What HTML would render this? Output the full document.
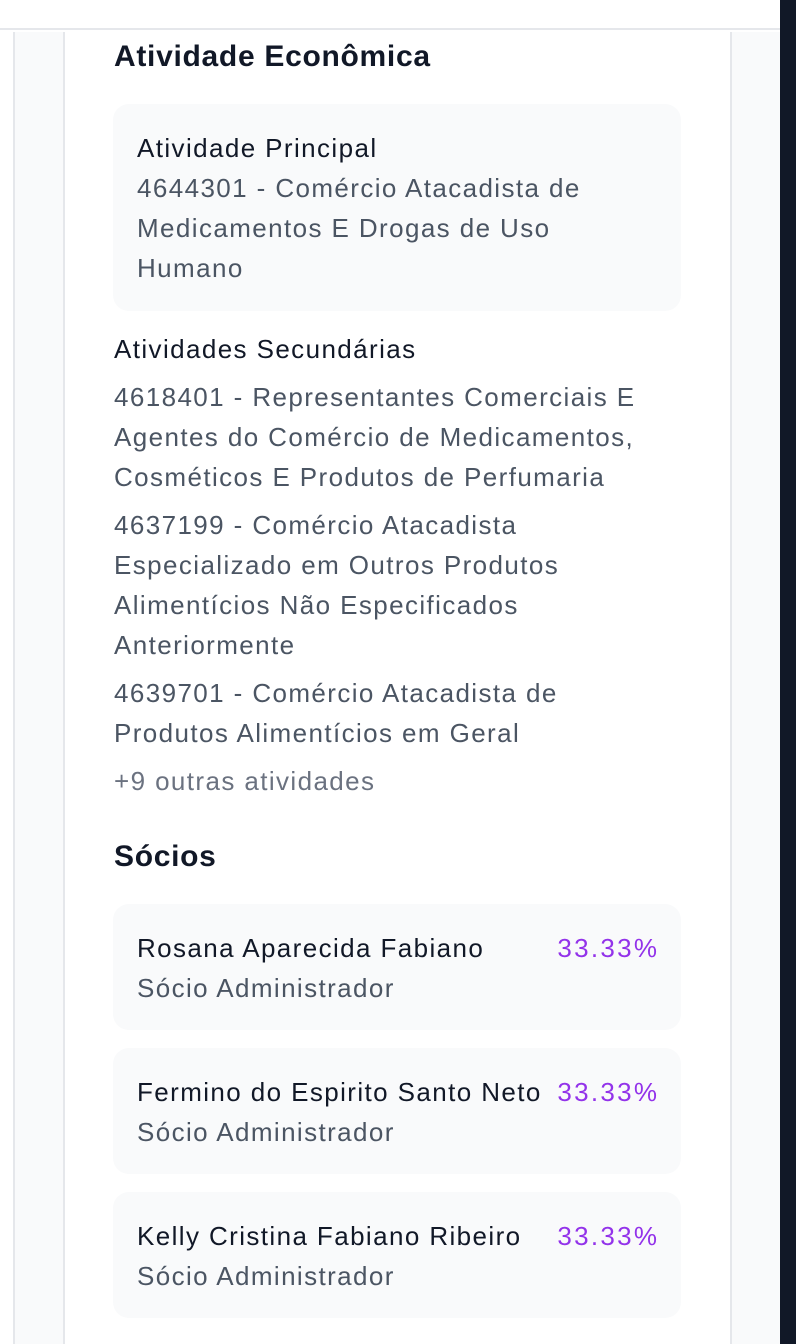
<!DOCTYPE html>
<html><head><meta charset="utf-8"><style>
*{margin:0;padding:0;box-sizing:border-box}
body{width:796px;height:1344px;overflow:hidden;background:#fff;font-family:"Liberation Sans",Arial,sans-serif;position:relative}
.top{position:absolute;left:0;top:0;width:780px;height:30px;background:#fff;border-bottom:2px solid #e5e7eb}
.l1{position:absolute;left:13px;top:32px;width:2px;height:1312px;background:#e5e7eb}
.lg{position:absolute;left:15px;top:32px;width:48px;height:1312px;background:#f9fafb}
.l2{position:absolute;left:63px;top:32px;width:2px;height:1312px;background:#e5e7eb}
.l3{position:absolute;left:730px;top:32px;width:2px;height:1312px;background:#e5e7eb}
.rg{position:absolute;left:732px;top:32px;width:48px;height:1312px;background:#f9fafb}
.dark{position:absolute;left:780px;top:0;width:16px;height:1344px;background:#111827}
.c{position:absolute;left:114px;width:640px}
h2{font-size:30px;font-weight:bold;color:#111827;position:absolute;left:114px;letter-spacing:0.7px;white-space:nowrap}
.box{position:absolute;left:113px;width:568px;background:#f9fafb;border-radius:16px;padding:0 24px}
.t,.g,.p{font-size:26px;line-height:40px;letter-spacing:1.4px;white-space:nowrap}
.t{color:#111827}
.g{color:#4b5563}
.m{color:#6b7280}
.p{position:absolute;right:24px;top:24px;color:#9333ea;letter-spacing:2.3px;margin-right:-2.3px}
</style></head><body>
<div class="top"></div><div class="l1"></div><div class="lg"></div><div class="l2"></div><div class="l3"></div><div class="rg"></div><div class="dark"></div>
<h2 style="top:40px">Atividade Econômica</h2>
<div class="box" style="top:104px;height:207px;padding-top:24px">
<div class="t">Atividade Principal</div>
<div class="g">4644301 - Comércio Atacadista de<br>Medicamentos E Drogas de Uso<br>Humano</div>
</div>
<div class="c" style="top:329px">
<div class="t">Atividades Secundárias</div>
<div class="g" style="margin-top:8px">4618401 - Representantes Comerciais E<br>Agentes do Comércio de Medicamentos,<br>Cosméticos E Produtos de Perfumaria</div>
<div class="g" style="margin-top:8px">4637199 - Comércio Atacadista<br>Especializado em Outros Produtos<br>Alimentícios Não Especificados<br>Anteriormente</div>
<div class="g" style="margin-top:8px">4639701 - Comércio Atacadista de<br>Produtos Alimentícios em Geral</div>
<div class="g m" style="margin-top:8px">+9 outras atividades</div>
</div>
<h2 style="top:840px">Sócios</h2>
<div class="box" style="top:904px;height:126px;padding-top:24px"><div class="t">Rosana Aparecida Fabiano</div><div class="g">Sócio Administrador</div><div class="p">33.33%</div></div>
<div class="box" style="top:1048px;height:126px;padding-top:24px"><div class="t">Fermino do Espirito Santo Neto</div><div class="g">Sócio Administrador</div><div class="p">33.33%</div></div>
<div class="box" style="top:1192px;height:126px;padding-top:24px"><div class="t">Kelly Cristina Fabiano Ribeiro</div><div class="g">Sócio Administrador</div><div class="p">33.33%</div></div>
</body></html>
